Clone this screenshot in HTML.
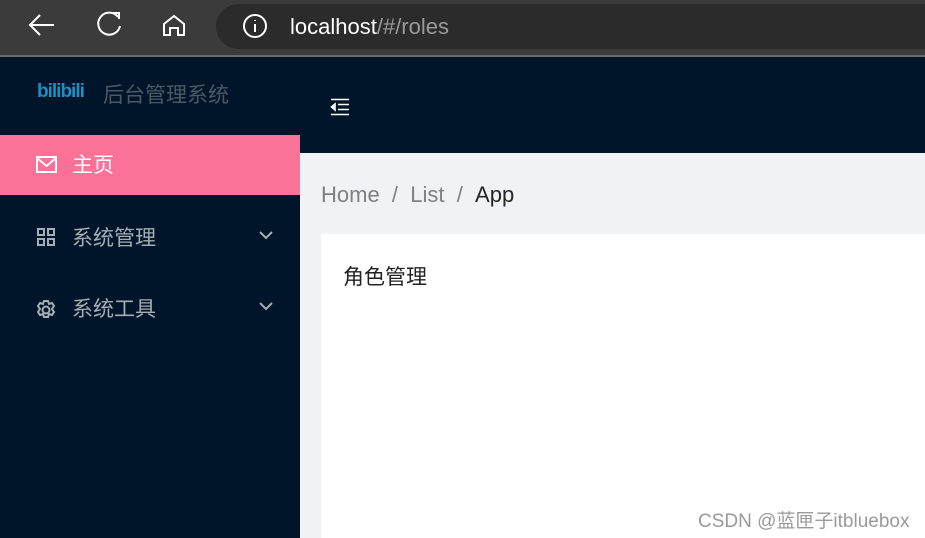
<!DOCTYPE html>
<html><head><meta charset="utf-8"><style>
body{margin:0;width:925px;height:538px;overflow:hidden;font-family:"Liberation Sans","Noto Sans CJK SC",sans-serif;background:#f0f2f5;position:relative}
.top{position:absolute;left:0;top:0;width:925px;height:55px;background:#3b3b3b;border-bottom:2px solid #6a6a6a}
.url{position:absolute;left:216px;top:4px;width:740px;height:45px;border-radius:23px;background:#2b2b2b}
.side{position:absolute;left:0;top:57px;width:300px;height:481px;background:#001529}
.hdr{position:absolute;left:300px;top:57px;width:625px;height:96px;background:#001529}
.item{position:absolute;left:0;width:300px;height:60px;color:#a6adb4;font-size:21px}
.item span{position:absolute;left:72px;top:14px}
.card{position:absolute;left:321px;top:234px;width:604px;height:304px;background:#fff}
</style></head><body>
<div class="top">
<svg width="925" height="55" style="position:absolute;left:0;top:0" fill="none" stroke="#fff" stroke-width="2">
<path d="M54 25H30M40 15L30 25L40 35"/>
<path d="M118 17A11 11 0 1 0 120 26"/><path d="M113 13H119V19"/>
<path d="M164 35V24L174 16L184 24V35H178V28H170V35Z"/>
</svg>
<div class="url">
<svg width="30" height="30" style="position:absolute;left:25px;top:8px" fill="none" stroke="#fff" stroke-width="2"><circle cx="14" cy="14" r="11"/><path d="M14 12v8M14 8v1"/></svg>
<div style="position:absolute;left:74px;top:10px;font-size:22px;color:#fff">localhost<span style="color:#9a9a9a">/#/roles</span></div>
</div>
</div>
<div class="side">
<div style="position:absolute;left:37px;top:24px;color:#1f8ec4;font-weight:bold;font-size:19px;letter-spacing:-1px">bilibili</div>
<div style="position:absolute;left:103px;top:22px;color:#4d5866;font-size:21px">后台管理系统</div>
<div class="item" style="top:78px;background:#fb7299;color:#fff"><svg width="22" height="18" style="position:absolute;left:36px;top:21px" fill="none" stroke="#fff" stroke-width="2"><rect x="1" y="1" width="19" height="15"/><path d="M1 2L10.5 10L20 2"/></svg><span>主页</span></div>
<div class="item" style="top:151px"><svg width="20" height="20" style="position:absolute;left:37px;top:20px" fill="none" stroke="#a6adb4" stroke-width="2"><rect x="1" y="1" width="6" height="6"/><rect x="11" y="1" width="6" height="6"/><rect x="1" y="11" width="6" height="6"/><rect x="11" y="11" width="6" height="6"/></svg><span>系统管理</span><svg width="14" height="10" style="position:absolute;left:259px;top:22px" fill="none" stroke="#a6adb4" stroke-width="2"><path d="M1 2L7 8L13 2"/></svg></div>
<div class="item" style="top:222px"><svg width="22" height="22" style="position:absolute;left:35px;top:20px" fill="none" stroke="#a6adb4" stroke-width="2"><circle cx="11" cy="11" r="3.5"/><path d="M9 2h4l1 3 3-1 2 3-2 3 2 3-2 3-3-1-1 3H9l-1-3-3 1-2-3 2-3-2-3 2-3 3 1z"/></svg><span>系统工具</span><svg width="14" height="10" style="position:absolute;left:259px;top:22px" fill="none" stroke="#a6adb4" stroke-width="2"><path d="M1 2L7 8L13 2"/></svg></div>
</div>
<div class="hdr"><svg width="20" height="18" style="position:absolute;left:30px;top:41px" fill="none" stroke="#fff" stroke-width="1.6"><path d="M1 1.5H19M8 6.5H19M8 11.5H19M1 16.5H19"/><path d="M5 6L1.5 9L5 12Z" fill="#fff"/></svg></div>
<div style="position:absolute;left:321px;top:182px;font-size:22px;color:#808080">Home&nbsp;&nbsp;/&nbsp;&nbsp;List&nbsp;&nbsp;/&nbsp;&nbsp;<span style="color:#262626">App</span></div>
<div class="card"><div style="position:absolute;left:22px;top:27px;font-size:21px;color:#222">角色管理</div>
<div style="position:absolute;left:377px;top:272px;font-size:19px;color:#9a9a9a">CSDN @蓝匣子itbluebox</div></div>
</body></html>
